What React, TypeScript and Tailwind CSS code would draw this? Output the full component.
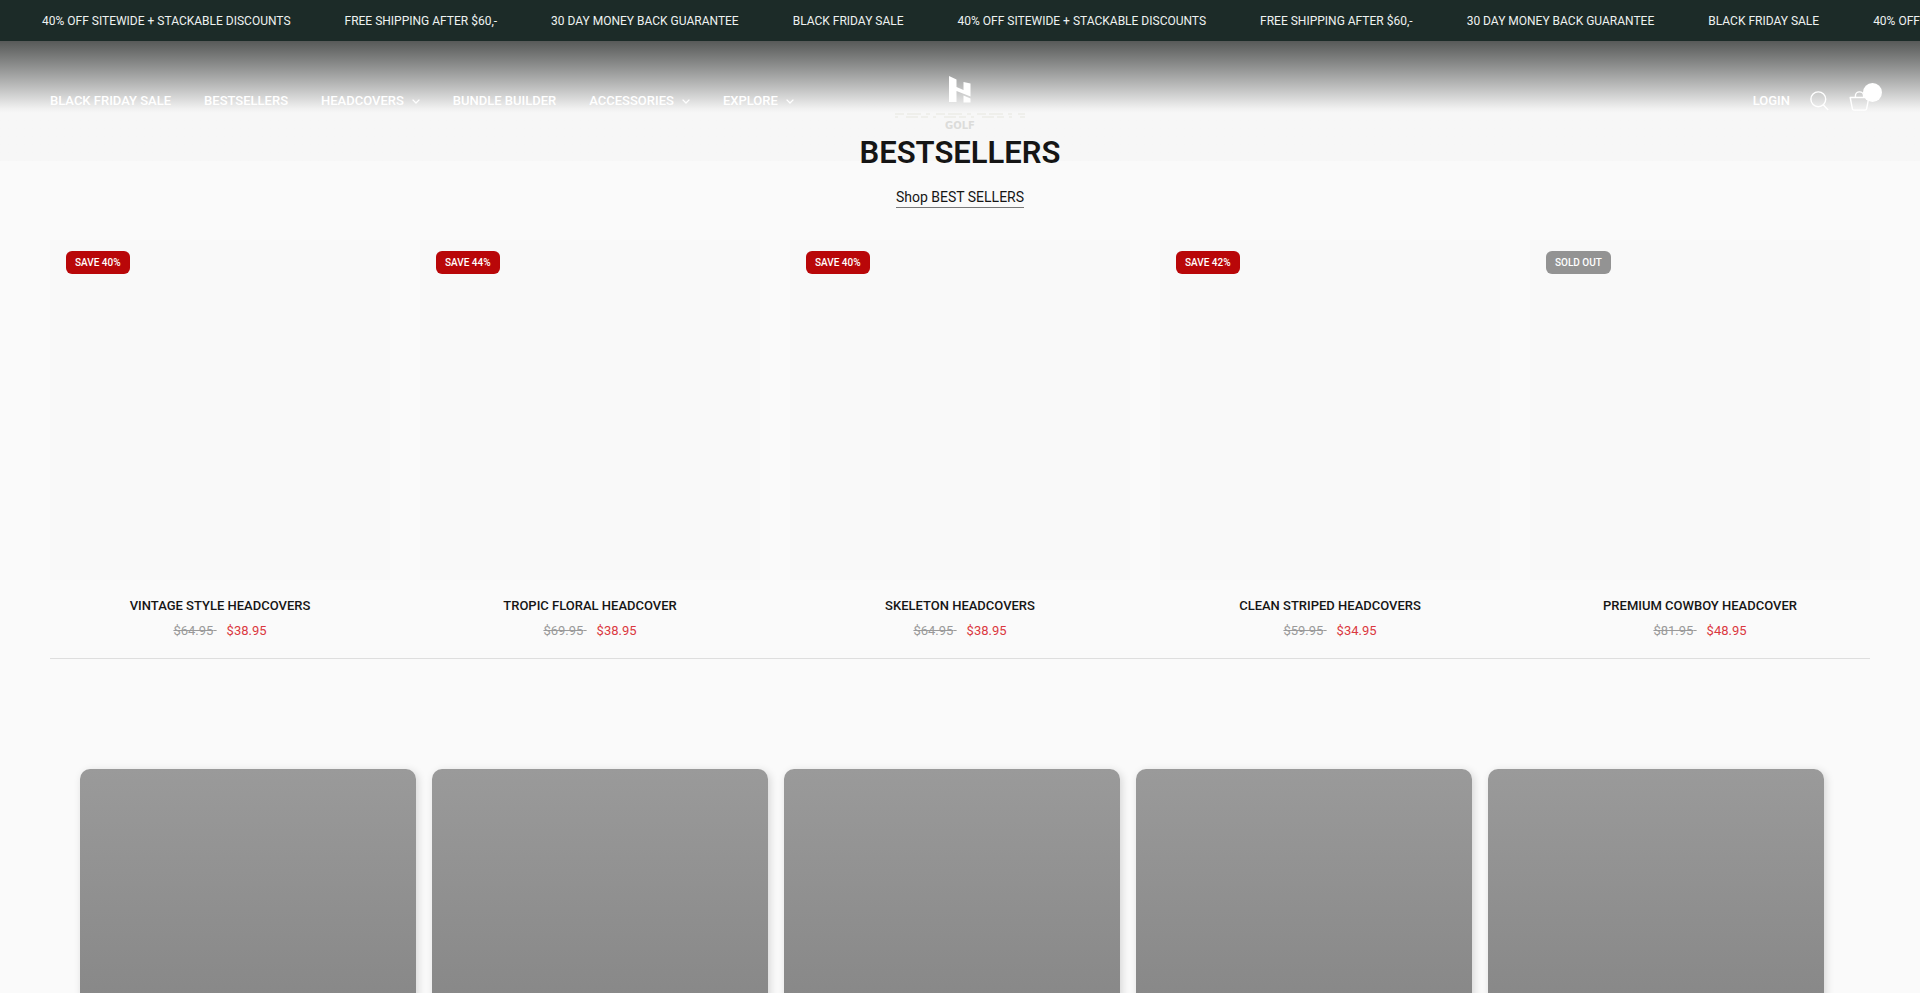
const promos = [
  "40% OFF SITEWIDE + STACKABLE DISCOUNTS",
  "FREE SHIPPING AFTER $60,-",
  "30 DAY MONEY BACK GUARANTEE",
  "BLACK FRIDAY SALE",
];

const links = [
  { label: "BLACK FRIDAY SALE", menu: false },
  { label: "BESTSELLERS", menu: false },
  { label: "HEADCOVERS", menu: true },
  { label: "BUNDLE BUILDER", menu: false },
  { label: "ACCESSORIES", menu: true },
  { label: "EXPLORE", menu: true },
];

const products = [
  { title: "VINTAGE STYLE HEADCOVERS", was: "$64.95", price: "$38.95", badge: "SAVE 40%", soldOut: false },
  { title: "TROPIC FLORAL HEADCOVER", was: "$69.95", price: "$38.95", badge: "SAVE 44%", soldOut: false },
  { title: "SKELETON HEADCOVERS", was: "$64.95", price: "$38.95", badge: "SAVE 40%", soldOut: false },
  { title: "CLEAN STRIPED HEADCOVERS", was: "$59.95", price: "$34.95", badge: "SAVE 42%", soldOut: false },
  { title: "PREMIUM COWBOY HEADCOVER", was: "$81.95", price: "$48.95", badge: "SOLD OUT", soldOut: true },
];

function Chevron() {
  return (
    <svg width="8" height="5" viewBox="0 0 8 5" fill="none" stroke="currentColor" strokeWidth="1.3" aria-hidden="true">
      <path d="M0.6 0.6 4 4 7.4 0.6" />
    </svg>
  );
}

function SearchIcon() {
  return (
    <svg width="19" height="20" viewBox="0 0 19 20" fill="none" stroke="currentColor" strokeWidth="1.4" aria-hidden="true">
      <circle cx="8.3" cy="8.3" r="7.4" />
      <path d="M13.2 13.8 18.2 19" />
    </svg>
  );
}

function BasketIcon() {
  return (
    <svg width="21" height="20" viewBox="0 0 21 20" fill="none" stroke="currentColor" strokeWidth="1.4" strokeLinejoin="round" aria-hidden="true">
      <path d="M1.2 6.5h18.6l-2.2 11.3a1.6 1.6 0 0 1-1.5 1.3H4.9a1.6 1.6 0 0 1-1.5-1.3z" />
      <path d="M6.4 6.5V5a4.1 4.1 0 0 1 8.2 0v1.5" />
    </svg>
  );
}

function Logo() {
  return (
    <a href="#" aria-label="Golf home" className="flex flex-col items-center pt-1 text-white">
      <svg width="22" height="27" viewBox="0 0 22 27" fill="currentColor" aria-hidden="true">
        <path d="M0 0 7.500 3.500V11L14.500 14V6L21.500 7.500V20.500L7.500 15V26H0z" />
        <path d="M14.500 19.500 21.500 22.500V26.500H14.500z" />
      </svg>
      {/* pale band behind the name, only just visible on the light part of the header */}
      <svg className="mt-[9px]" width="130" height="7" viewBox="0 0 130 7" fill="none" stroke="#efefeb" strokeWidth="2" aria-hidden="true">
        <path d="M0 2h130" strokeDasharray="9 3 14 5 4 6" />
        <path d="M0 5h130" strokeDasharray="3 8 12 3 7 5" />
      </svg>
      <span className="mt-[2px] font-['DejaVu_Sans',sans-serif] text-[10px] leading-[10px] font-bold text-[#dcdcda]">GOLF</span>
    </a>
  );
}

function PromoBar() {
  return (
    <div className="flex h-[41px] items-center gap-[54px] overflow-hidden bg-[#1c2b28] pl-[42px] text-[12px] whitespace-nowrap text-[#eef2f1]">
      {[0, 1, 2].map((run) =>
        promos.map((promo) => <span key={`${run}-${promo}`}>{promo}</span>),
      )}
    </div>
  );
}

function Header() {
  return (
    <header className="absolute inset-x-0 top-full grid h-[120px] grid-cols-[1fr_auto_1fr] items-center bg-linear-to-b from-[#585a59] from-0% via-[#f0f0f0] via-56% to-[#f7f7f7] to-60% px-[50px] text-[13px] font-medium text-white">
      <nav className="flex items-center gap-[33px]">
        {links.map((link) => (
          <a key={link.label} href="#" className="flex items-center gap-2 whitespace-nowrap">
            {link.label}
            {link.menu && <Chevron />}
          </a>
        ))}
      </nav>
      <Logo />
      <div className="flex items-center justify-end gap-5">
        <a href="#">LOGIN</a>
        <button type="button" aria-label="Search">
          <SearchIcon />
        </button>
        <button type="button" aria-label="Cart" className="relative">
          <BasketIcon />
          <span className="absolute -top-2 -right-3 size-[19px] rounded-full bg-white" />
        </button>
      </div>
    </header>
  );
}

function ProductCard({ product }: { product: (typeof products)[number] }) {
  return (
    <li className="text-center">
      <a href="#" className="block">
        <div className="flex aspect-square items-start bg-[#f9f9f9] px-4 py-[11px]">
          <span
            className={`rounded-md px-[9px] text-[10px] leading-[23px] font-medium text-white ${product.soldOut ? "bg-[#939393]" : "bg-[#b90709]"}`}
          >
            {product.badge}
          </span>
        </div>
        <h3 className="mt-4 text-[13px] leading-5 font-medium text-[#151515]">{product.title}</h3>
      </a>
      <p className="mt-[5px] text-[13px] leading-5">
        <del className="whitespace-pre text-[#9a9a9a]">{product.was} </del>
        <span className="ml-[10px] text-[#db3840]">{product.price}</span>
      </p>
    </li>
  );
}

export default function App() {
  return (
    <div className="h-screen overflow-hidden bg-[#fafafa] font-[Roboto,'Liberation_Sans',sans-serif] text-[#151515]">
      <div className="relative">
        <PromoBar />
        <Header />
      </div>
      <main>
        <section className="mx-[50px] border-b border-[#dedede] pt-[91px] pb-[17px]">
          <div className="relative flex flex-col items-center">
            <h2 className="text-[31px] leading-[42px] font-semibold">BESTSELLERS</h2>
            <a href="#" className="mt-[13px] border-b border-[#777777] text-[14px] leading-5">
              Shop BEST SELLERS
            </a>
          </div>
          <ul className="mt-8 grid grid-cols-5 gap-[30px]">
            {products.map((product) => (
              <ProductCard key={product.title} product={product} />
            ))}
          </ul>
        </section>
        <section aria-label="Gallery" className="mt-[110px] grid grid-cols-5 gap-4 pr-24 pl-20">
          {products.map((product) => (
            <div
              key={product.title}
              className="h-[600px] rounded-[10px] bg-linear-to-b from-[#9a9a9a] to-[#6c6c6c] shadow-[2px_2px_8px_rgba(0,0,0,0.15)]"
            />
          ))}
        </section>
      </main>
    </div>
  );
}
